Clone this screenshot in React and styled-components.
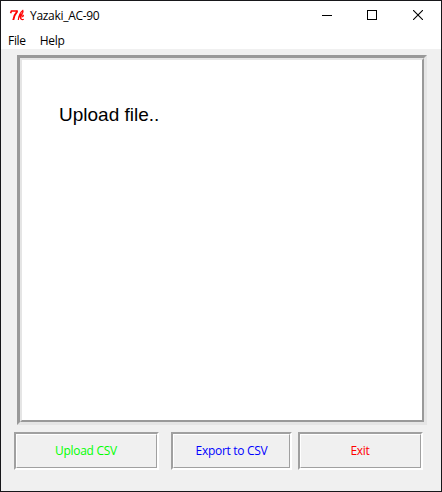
import React from "react";
import styled, { createGlobalStyle } from "styled-components";

const Global = createGlobalStyle`
  body { margin: 0; overflow: hidden; }
  * { box-sizing: border-box; }
`;

const Window = styled.div`
  width: 442px;
  height: 492px;
  display: flex;
  flex-direction: column;
  border: 1px solid #17171a;
  background: #f0f0f0;
  color: #000;
  font: 12px/16px "Open Sans", "Noto Sans", sans-serif;
`;

const TitleBar = styled.header`
  display: flex;
  align-items: center;
  height: 30px;
  padding-left: 8px;
  background: #fff;
`;

const Label = styled.span`
  white-space: nowrap;
  letter-spacing: -0.3px;
`;

const Title = styled.h1`
  flex: 1;
  margin: 0 0 0 5px;
  font-size: 12px;
  font-weight: 400;
`;

const WindowControl = styled.button`
  width: ${(p) => p.$width || 46}px;
  height: 30px;
  padding: 0 0 2px;
  border: 0;
  background: transparent;
  display: grid;
  place-items: center;
`;

const MenuBar = styled.nav`
  display: flex;
  align-items: center;
  gap: 14px;
  height: 18px;
  padding: 2px 0 0 7px;
  background: #fff;
`;

const Canvas = styled.main`
  width: 410px;
  height: 370px;
  margin: 6px 0 0 16px;
  border: solid;
  border-width: 3px;
  border-color: #999 #e5e5e5 #e5e5e5 #999;
`;

const Page = styled.div`
  height: 100%;
  padding: 44px 0 0 37px;
  border: 2px solid;
  border-color: #e5e5e5 #999 #999 #e5e5e5;
  background: #fff;
  font: 19px/22px "Liberation Sans", Arial, sans-serif;
`;

const Actions = styled.footer`
  display: flex;
  margin: 7px 0 0 13px;
`;

const ActionButton = styled.button`
  width: ${(p) => p.$width}px;
  height: 38px;
  margin-right: ${(p) => p.$after || 0}px;
  padding: 0;
  border: 2px solid;
  border-color: #a0a0a0 #fff #fff #a0a0a0;
  background: #f0f0f0;
  color: ${(p) => p.$color};
  font: inherit;
`;

const ButtonFace = styled.span`
  display: flex;
  align-items: center;
  justify-content: center;
  height: 100%;
  padding-right: ${(p) => p.$inset || 0}px;
  border: 1px solid;
  border-color: #fff #a0a0a0 #a0a0a0 #fff;
`;

const TkIcon = () => (
  <svg width="16" height="16" viewBox="0 0 16 16" fill="none" stroke="#f00">
    <path d="M1.6 5.2L2.4 3H8.8" strokeWidth="1.6" />
    <path d="M8.4 3.2C6.4 5.6 4.6 8.4 4.3 12" strokeWidth="1.9" />
    <path d="M9.3 12C9.7 8.2 11 4.6 13.8 2.4C14.6 4.2 12.8 6.2 10.6 7.6" strokeWidth="1.2" />
    <path d="M10.2 9.2C11.8 7 14.2 6.4 14.4 7.6C14.5 8.7 12.6 9.2 11.2 9.2C11.8 10.8 12.6 12.2 14.8 11.2" strokeWidth="1.2" />
  </svg>
);

export default function App() {
  return (
    <Window>
      <Global />
      <TitleBar>
        <TkIcon />
        <Title><Label>Yazaki_AC-90</Label></Title>
        <WindowControl $width={44} aria-label="Minimize">
          <svg width="10" height="10" shapeRendering="crispEdges"><path d="M0 5.5H10" stroke="#000" /></svg>
        </WindowControl>
        <WindowControl aria-label="Maximize">
          <svg width="10" height="10" shapeRendering="crispEdges"><path d="M.5 .5H9.5V9.5H.5Z" fill="none" stroke="#000" /></svg>
        </WindowControl>
        <WindowControl aria-label="Close">
          <svg width="10" height="10"><path d="M0 0L10 10M10 0L0 10" stroke="#000" strokeWidth="1.1" /></svg>
        </WindowControl>
      </TitleBar>
      <MenuBar>
        <Label>File</Label>
        <Label>Help</Label>
      </MenuBar>
      <Canvas><Page>Upload file..</Page></Canvas>
      <Actions>
        <ActionButton $width={145} $after={12} $color="#0f0">
          <ButtonFace $inset={1}><Label>Upload CSV</Label></ButtonFace>
        </ActionButton>
        <ActionButton $width={121} $after={6} $color="#00f">
          <ButtonFace><Label>Export to CSV</Label></ButtonFace>
        </ActionButton>
        <ActionButton $width={125} $color="#f00">
          <ButtonFace $inset={1}><Label>Exit</Label></ButtonFace>
        </ActionButton>
      </Actions>
    </Window>
  );
}
